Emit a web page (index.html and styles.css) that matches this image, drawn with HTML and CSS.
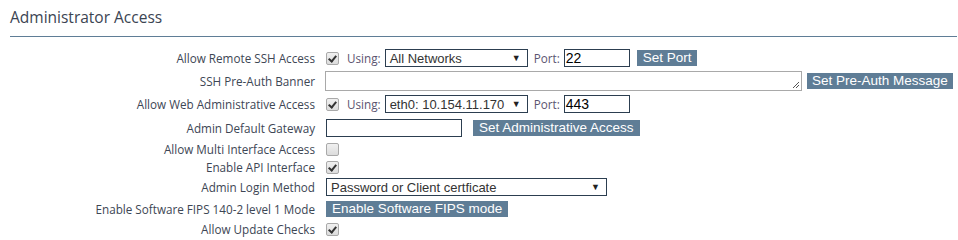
FILE: index.html
```html
<!DOCTYPE html>
<html>
<head>
<meta charset="utf-8">
<link rel="stylesheet" href="styles.css">
</head>
<body>
<div class="panel">
  <h2 class="title">Administrator Access</h2>
  <div class="form">
    <div class="row r1">
      <div class="label">Allow Remote SSH Access</div>
      <div class="ctrl">
        <span class="cb checked"></span>
        <span class="inl">Using:</span>
        <span class="select w-net"><span class="val">All Networks</span><span class="arrow">▼</span></span>
        <span class="inl port">Port:</span>
        <span class="input w-port">22</span>
        <span class="btn">Set Port</span>
      </div>
    </div>
    <div class="row r2">
      <div class="label">SSH Pre-Auth Banner</div>
      <div class="ctrl">
        <span class="textarea"><svg class="grip" width="8" height="8" viewBox="0 0 8 8"><path d="M7 1L1 7M7 4L4 7" stroke="#555" stroke-width="1"/></svg></span>
        <span class="btn prebtn">Set Pre-Auth Message</span>
      </div>
    </div>
    <div class="row r3">
      <div class="label">Allow Web Administrative Access</div>
      <div class="ctrl">
        <span class="cb checked"></span>
        <span class="inl">Using:</span>
        <span class="select w-net"><span class="val">eth0: 10.154.11.170</span><span class="arrow">▼</span></span>
        <span class="inl port">Port:</span>
        <span class="input w-port">443</span>
      </div>
    </div>
    <div class="row r4">
      <div class="label">Admin Default Gateway</div>
      <div class="ctrl">
        <span class="input w-gw"></span>
        <span class="btn gwbtn">Set Administrative Access</span>
      </div>
    </div>
    <div class="row r5">
      <div class="label">Allow Multi Interface Access</div>
      <div class="ctrl"><span class="cb"></span></div>
    </div>
    <div class="row r6">
      <div class="label">Enable API Interface</div>
      <div class="ctrl"><span class="cb checked"></span></div>
    </div>
    <div class="row r7">
      <div class="label">Admin Login Method</div>
      <div class="ctrl">
        <span class="select w-login"><span class="val">Password or Client certficate</span><span class="arrow">▼</span></span>
      </div>
    </div>
    <div class="row r8">
      <div class="label">Enable Software FIPS 140-2 level 1 Mode</div>
      <div class="ctrl"><span class="btn">Enable Software FIPS mode</span></div>
    </div>
    <div class="row r9">
      <div class="label">Allow Update Checks</div>
      <div class="ctrl"><span class="cb checked"></span></div>
    </div>
  </div>
</div>
</body>
</html>
```

FILE: styles.css
```css
html, body {
  margin: 0;
  padding: 0;
  background: #fff;
}
.panel {
  padding: 0 1px 0 10px;
  font-family: "Open Sans", "Noto Sans", sans-serif;
  color: #3d4654;
}
.title {
  margin: 0;
  padding-top: 7px;
  height: 37px;
  box-sizing: border-box;
  font-size: 15.5px;
  font-weight: normal;
  line-height: 20px;
  color: #3b4452;
  border-bottom: 1px solid #5f7d96;
}
.form {
  margin-top: 10px;
  margin-left: -10px;
}
.row {
  display: grid;
  grid-template-columns: 315px 1fr;
  column-gap: 11px;
  align-items: center;
}
.r1 { height: 22px; }
.r2 { height: 24px; }
.r3 { height: 22px; }
.r4 { height: 26px; }
.r5 { height: 16px; }
.r6 { height: 20px; }
.r7 { height: 20px; }
.r8 { height: 24px; }
.r9 { height: 16px; }
.label {
  text-align: right;
  font-size: 11.7px;
  line-height: 14px;
  color: #3d4654;
  white-space: nowrap;
}
.ctrl {
  display: flex;
  align-items: center;
  font-family: "Liberation Sans", Arial, sans-serif;
  font-size: 13px;
}
.cb {
  width: 11px;
  height: 11px;
  border: 1px solid #a9a9a9;
  border-radius: 2px;
  background: linear-gradient(#f0f0f0, #dcdcdc);
  position: relative;
  flex: none;
}
.cb.checked::after {
  content: "";
  position: absolute;
  left: 3px;
  top: 1px;
  width: 3px;
  height: 6px;
  border: solid #333;
  border-width: 0 2px 2px 0;
  transform: rotate(40deg);
}
.inl {
  font-family: "Open Sans", "Noto Sans", sans-serif;
  font-size: 11.7px;
  color: #5b5470;
  margin-left: 8px;
  margin-right: 4px;
}
.inl.port {
  margin-left: 6px;
  margin-right: 4px;
}
.select {
  display: flex;
  align-items: center;
  justify-content: space-between;
  box-sizing: border-box;
  height: 18px;
  border: 1px solid #2c3e50;
  padding: 0 6px 0 4px;
  color: #333;
  background: #fff;
}
.select .arrow {
  font-size: 9px;
  color: #222;
}
.w-net { width: 143px; }
.w-login { width: 281px; }
.input {
  box-sizing: border-box;
  height: 18px;
  border: 1px solid #2c3e50;
  padding: 0 1px;
  line-height: 16px;
  color: #000;
  font-size: 14px;
}
.w-port { width: 66px; }
.w-gw { width: 136px; }
.btn {
  background: #5f7d96;
  color: #fff;
  font-size: 13.5px;
  line-height: 16px;
  height: 16px;
  padding: 0 6px;
  margin-left: 7px;
  white-space: nowrap;
}
.gwbtn { margin-left: 11px; }
.prebtn { margin-left: 5px; padding: 0 5px; }
.r8 .btn { margin-left: 0; }
.textarea {
  box-sizing: border-box;
  width: 477px;
  height: 20px;
  border: 1px solid #a9a9a9;
  position: relative;
  margin-left: -1px;
}
.grip {
  position: absolute;
  right: 1px;
  bottom: 1px;
}
```
